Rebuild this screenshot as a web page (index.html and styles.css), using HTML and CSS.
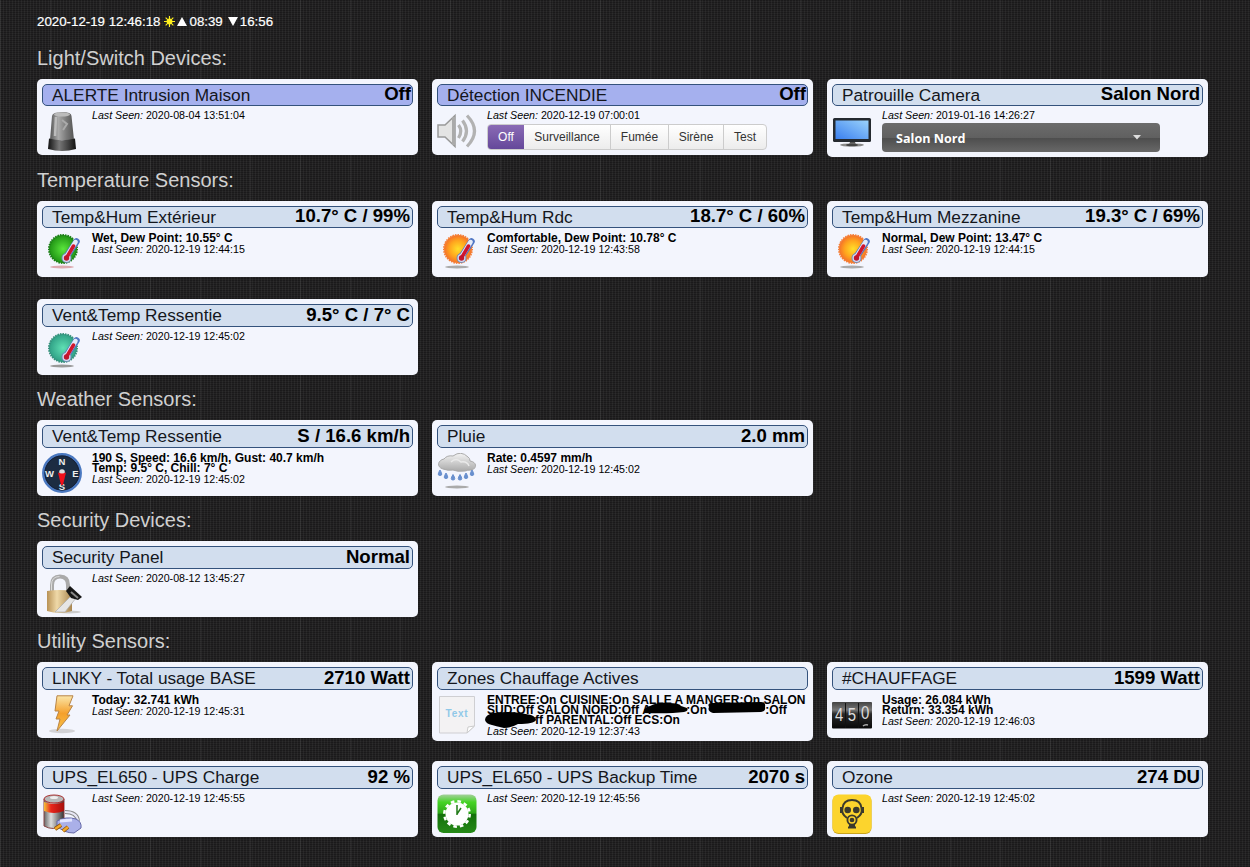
FILE: index.html
```html
<!DOCTYPE html>
<html lang="en">
<head>
<meta charset="utf-8">
<title>Dashboard</title>
<link rel="stylesheet" href="styles.css">
</head>
<body>
<svg class="defs" width="0" height="0" aria-hidden="true">
  <defs>
    <linearGradient id="gDome"><stop offset="0" stop-color="#555"/><stop offset=".35" stop-color="#aaa"/><stop offset=".7" stop-color="#777"/><stop offset="1" stop-color="#555"/></linearGradient>
    <linearGradient id="gBase"><stop offset="0" stop-color="#111"/><stop offset=".4" stop-color="#777"/><stop offset="1" stop-color="#111"/></linearGradient>
    <linearGradient id="gScreen" x1="0" y1="1" x2="1" y2="0"><stop offset="0" stop-color="#3a7ff0"/><stop offset="1" stop-color="#9ad2fa"/></linearGradient>
    <radialGradient id="gGreen"><stop offset="0" stop-color="#5ae63c"/><stop offset="1" stop-color="#1f9214"/></radialGradient>
    <radialGradient id="gTeal"><stop offset="0" stop-color="#5fe0b4"/><stop offset="1" stop-color="#2f9f85"/></radialGradient>
    <radialGradient id="gOrange"><stop offset="0" stop-color="#ffdf2a"/><stop offset=".6" stop-color="#ffa51e"/><stop offset="1" stop-color="#f4702a"/></radialGradient>
    <linearGradient id="gCloud" x1="0" y1="0" x2="0" y2="1"><stop offset="0" stop-color="#f4f4f4"/><stop offset="1" stop-color="#a9a9a9"/></linearGradient>
    <linearGradient id="gBolt" x1="0" y1="0" x2="0" y2="1"><stop offset="0" stop-color="#fbe6a8"/><stop offset=".5" stop-color="#f5a02c"/><stop offset="1" stop-color="#f7c24a"/></linearGradient>
    <linearGradient id="gLock"><stop offset="0" stop-color="#b89256"/><stop offset=".4" stop-color="#efd9a8"/><stop offset="1" stop-color="#a98650"/></linearGradient>
    <linearGradient id="gRed"><stop offset="0" stop-color="#f5c13a"/><stop offset=".35" stop-color="#e8261c"/><stop offset="1" stop-color="#a80f0c"/></linearGradient>
    <linearGradient id="gMetal"><stop offset="0" stop-color="#666"/><stop offset=".35" stop-color="#ddd"/><stop offset="1" stop-color="#333"/></linearGradient>
    <linearGradient id="gClock" x1="0" y1="0" x2="0" y2="1"><stop offset="0" stop-color="#a4cf9c"/><stop offset=".2" stop-color="#45d425"/><stop offset=".48" stop-color="#2fa71a"/><stop offset=".52" stop-color="#13700a"/><stop offset="1" stop-color="#268a18"/></linearGradient>
    <linearGradient id="gCounter" x1="0" y1="0" x2="0" y2="1"><stop offset="0" stop-color="#444"/><stop offset=".3" stop-color="#777"/><stop offset=".45" stop-color="#2a2a2a"/><stop offset="1" stop-color="#080808"/></linearGradient>
    <symbol id="thermo" viewBox="0 0 40 40">
      <path d="M34.500 8.500 25 23" stroke="#5076c4" stroke-width="6.500" stroke-linecap="round"/>
      <circle cx="24.500" cy="25" r="5" fill="#7088b8"/>
      <path d="M33.500 9 25 23" stroke="#e4eaf8" stroke-width="4.500" stroke-linecap="round"/>
      <circle cx="24.500" cy="25" r="4" fill="#d4dcf0"/>
      <path d="M31.500 13 25 24" stroke="#d0152e" stroke-width="3.500" stroke-linecap="round"/>
      <circle cx="24.500" cy="25" r="2.700" fill="#c0152e"/>
    </symbol>
  </defs>
</svg>

<main class="dashboard">
  <div class="clock">2020-12-19 12:46:18
    <svg class="sun" viewBox="0 0 12 12"><path d="M6 0v12M0 6h12M1.8 1.8l8.4 8.4M10.2 1.8 1.8 10.2" stroke="#fff01e" stroke-width="1.2"/><circle cx="6" cy="6" r="3.2" fill="#fff01e"/></svg>
    <svg class="arrow" viewBox="0 0 10 9"><path d="M5 0 10 9H0z" fill="#fff"/></svg><span class="rise">08:39</span>
    <svg class="arrow" viewBox="0 0 10 9"><path d="M0 0h10L5 9z" fill="#fff"/></svg><span>16:56</span>
  </div>

  <section class="group group-switches">
    <h2>Light/Switch Devices:</h2>
    <div class="cards">
      <article class="card">
        <header class="bar bar-off"><span>ALERTE Intrusion Maison</span><b>Off</b></header>
        <div class="body">
          <svg class="icon" viewBox="0 0 40 40"><path d="M8 29 10 5Q10.500 1 20 1t9.500 4L32 29z" fill="url(#gDome)"/><ellipse cx="20" cy="3.500" rx="8" ry="2" fill="#bbb"/><path d="M14 6 13 25" stroke="#bbb" stroke-width="2.500"/><path d="m20 9 5 4-4 6" stroke="#aaa" stroke-width="2" fill="none"/><path d="M7 27.500Q20 31 33 27.500L34 38Q20 42 6 38z" fill="url(#gBase)"/></svg>
          <div class="info"><p class="seen"><i>Last Seen:</i> 2020-08-04 13:51:04</p></div>
        </div>
      </article>
      <article class="card">
        <header class="bar bar-off"><span>Détection INCENDIE</span><b>Off</b></header>
        <div class="body">
          <svg class="icon" viewBox="0 0 40 40"><path d="M1 14h7L18 4.500v31L8 26H1z" fill="#e4e4e4" stroke="#999" stroke-width="1.500"/><path d="M16.500 6v28" stroke="#aaa" stroke-width="3"/><g fill="none" stroke="#b2b2b2" stroke-width="3.200"><path d="M21.500 14q4.500 6 0 13"/><path d="M25.500 9.500q8 10.500 0 21"/><path d="M30 4.500q15 15.500 0 31"/></g></svg>
          <div class="info"><p class="seen"><i>Last Seen:</i> 2020-12-19 07:00:01</p>
            <div class="levels"><span class="on w-off">Off</span><span class="w-surv">Surveillance</span><span class="w-fum">Fumée</span><span class="w-sir">Sirène</span><span class="w-test">Test</span></div>
          </div>
        </div>
      </article>
      <article class="card card-select">
        <header class="bar"><span>Patrouille Camera</span><b>Salon Nord</b></header>
        <div class="body">
          <svg class="icon" viewBox="0 0 40 40"><rect x="1" y="7" width="38" height="24" rx="1.500" fill="#252a30"/><rect x="3.500" y="9.500" width="33" height="18.500" fill="url(#gScreen)"/><path d="M18 31h5l1 2.500h-7z" fill="#555"/><ellipse cx="20" cy="34" rx="12" ry="1.600" fill="#888"/><ellipse cx="20" cy="34" rx="6" ry="1.300" fill="#444"/></svg>
          <div class="info"><p class="seen"><i>Last Seen:</i> 2019-01-16 14:26:27</p>
            <div class="select"><span>Salon Nord</span><svg width="8" height="5" viewBox="0 0 8 5"><path d="M0 0h8L4 4.500z" fill="#ddd"/></svg></div>
          </div>
        </div>
      </article>
    </div>
  </section>

  <section class="group group-temp">
    <h2>Temperature Sensors:</h2>
    <div class="cards">
      <article class="card">
        <header class="bar"><span>Temp&amp;Hum Extérieur</span><b>10.7° C / 99%</b></header>
        <div class="body">
          <svg class="icon" viewBox="0 0 40 40"><ellipse cx="20" cy="34" rx="12" ry="1.500" fill="#dcaab0"/><circle cx="21" cy="16" r="14" fill="url(#gGreen)"/><circle cx="21" cy="16" r="14" fill="none" stroke="#1c7d18" stroke-width="2" stroke-dasharray="1.500 1"/><use href="#thermo"/></svg>
          <div class="info"><p class="data">Wet, Dew Point: 10.55° C</p><p class="seen"><i>Last Seen:</i> 2020-12-19 12:44:15</p></div>
        </div>
      </article>
      <article class="card">
        <header class="bar"><span>Temp&amp;Hum Rdc</span><b>18.7° C / 60%</b></header>
        <div class="body">
          <svg class="icon" viewBox="0 0 40 40"><ellipse cx="20" cy="34" rx="12" ry="1.500" fill="#aaa"/><circle cx="21" cy="16" r="14" fill="url(#gOrange)"/><circle cx="21" cy="16" r="14" fill="none" stroke="#f4803a" stroke-width="2" stroke-dasharray="1.500 1"/><use href="#thermo"/></svg>
          <div class="info"><p class="data">Comfortable, Dew Point: 10.78° C</p><p class="seen"><i>Last Seen:</i> 2020-12-19 12:43:58</p></div>
        </div>
      </article>
      <article class="card">
        <header class="bar"><span>Temp&amp;Hum Mezzanine</span><b>19.3° C / 69%</b></header>
        <div class="body">
          <svg class="icon" viewBox="0 0 40 40"><ellipse cx="20" cy="34" rx="12" ry="1.500" fill="#aaa"/><circle cx="21" cy="16" r="14" fill="url(#gOrange)"/><circle cx="21" cy="16" r="14" fill="none" stroke="#f4803a" stroke-width="2" stroke-dasharray="1.500 1"/><use href="#thermo"/></svg>
          <div class="info"><p class="data">Normal, Dew Point: 13.47° C</p><p class="seen"><i>Last Seen:</i> 2020-12-19 12:44:15</p></div>
        </div>
      </article>
      <article class="card card-tall-bar">
        <header class="bar"><span>Vent&amp;Temp Ressentie</span><b>9.5° C / 7° C</b></header>
        <div class="body">
          <svg class="icon" viewBox="0 0 40 40"><ellipse cx="20" cy="34" rx="12" ry="1.500" fill="#999"/><circle cx="21" cy="16" r="14" fill="url(#gTeal)"/><circle cx="21" cy="16" r="14" fill="none" stroke="#368f7b" stroke-width="2" stroke-dasharray="1.500 1"/><use href="#thermo"/></svg>
          <div class="info"><p class="seen"><i>Last Seen:</i> 2020-12-19 12:45:02</p></div>
        </div>
      </article>
    </div>
  </section>

  <section class="group">
    <h2>Weather Sensors:</h2>
    <div class="cards">
      <article class="card">
        <header class="bar"><span>Vent&amp;Temp Ressentie</span><b>S / 16.6 km/h</b></header>
        <div class="body">
          <svg class="icon" viewBox="0 0 40 40"><circle cx="20" cy="20" r="18.700" fill="#1c2c42" stroke="#4a78c0" stroke-width="2.500"/><circle cx="20" cy="20" r="17" fill="none" stroke="#14203a"/><g class="compass"><text x="20" y="12">N</text><text x="33.500" y="23.500">E</text><text x="20" y="36.500">S</text><text x="7.500" y="23.500">W</text></g><circle cx="20" cy="19" r="2.800" fill="#ddd"/><path d="M16 19.500q4 2 8 0L21 32h-2z" fill="#f0101a"/></svg>
          <div class="info"><p class="data">190 S, Speed: 16.6 km/h, Gust: 40.7 km/h<br>Temp: 9.5° C, Chill: 7° C</p><p class="seen"><i>Last Seen:</i> 2020-12-19 12:45:02</p></div>
        </div>
      </article>
      <article class="card">
        <header class="bar"><span>Pluie</span><b>2.0 mm</b></header>
        <div class="body">
          <svg class="icon" viewBox="0 0 40 40"><ellipse cx="20" cy="34" rx="12" ry="1.500" fill="#aaa"/><path d="M6 16C-1 14 1 7 7 6q3-4 9-3Q24-3 31 4q2 1 2 4c7 1 7 7 2 9q-5 0-7 1-8 1-12-1-5 1-10-1z" fill="url(#gCloud)" stroke="#aaa"/><path d="M14 9q5-5 10 0 6-1 8 4" fill="none" stroke="#e9e9e9" stroke-width="1.500"/><g fill="#688fce"><path id="drop" d="M3 17q3.500 5.500 0 5.500T3 17z" stroke="#688fce"/><use href="#drop" x="6" y="3"/><use href="#drop" x="13" y="4.500"/><use href="#drop" x="20" y="4.500"/><use href="#drop" x="26" y="3"/><use href="#drop" x="32" y="0"/></g></svg>
          <div class="info"><p class="data">Rate: 0.4597 mm/h</p><p class="seen"><i>Last Seen:</i> 2020-12-19 12:45:02</p></div>
        </div>
      </article>
    </div>
  </section>

  <section class="group">
    <h2>Security Devices:</h2>
    <div class="cards">
      <article class="card">
        <header class="bar"><span>Security Panel</span><b>Normal</b></header>
        <div class="body">
          <svg class="icon" viewBox="0 0 40 40"><ellipse cx="27" cy="38" rx="12" ry="1.500" fill="#ccc"/><path d="M10 18V11q0-8.500 8-8.500t8 8.500v7" fill="none" stroke="#aaa" stroke-width="4"/><path d="M9.500 18V11q0-8.500 8-8.500" fill="none" stroke="#ddd"/><path d="M5 17q12-2 25 0v20q-12 4-25 0z" fill="url(#gLock)"/><path d="M30 21 13 38h10l11-14z" fill="#e6e6e6" stroke="#aaa" stroke-width=".7"/><path d="m28 12 12 11-4 3-7-2-5-7z" fill="#161616"/><path d="m29 18 7 6" stroke="#888" stroke-width="2"/></svg>
          <div class="info"><p class="seen"><i>Last Seen:</i> 2020-08-12 13:45:27</p></div>
        </div>
      </article>
    </div>
  </section>

  <section class="group group-utility">
    <h2>Utility Sensors:</h2>
    <div class="cards">
      <article class="card">
        <header class="bar"><span>LINKY - Total usage BASE</span><b>2710 Watt</b></header>
        <div class="body">
          <svg class="icon" viewBox="0 0 40 40"><ellipse cx="20" cy="36" rx="13" ry="2.200" fill="#d2d2d6"/><path d="M15 .8h16l-4 10h3.500L25 20h3L15 36l3-12h-4l3-8h-4z" fill="url(#gBolt)" stroke="#b88446"/></svg>
          <div class="info"><p class="data">Today: 32.741 kWh</p><p class="seen"><i>Last Seen:</i> 2020-12-19 12:45:31</p></div>
        </div>
      </article>
      <article class="card card-zones">
        <header class="bar"><span>Zones Chauffage Actives</span></header>
        <div class="body">
          <svg class="icon" viewBox="0 0 40 40"><path d="M2.500 1.500h35V31L30 38H2.500z" fill="#f3f2f3" stroke="#cfcfd2"/><path d="M37.500 31 30 38l1-6z" fill="#fff" stroke="#ccc"/><text class="text-label" x="20" y="22">Text</text></svg>
          <div class="info">
            <p class="data">ENTREE:On CUISINE:On SALLE A MANGER:On SALON<br>SUD:Off SALON NORD:Off <span class="gap gap-a">A</span>:On <span class="gap gap-b"></span>:Off<br><span class="gap gap-c"></span>ff PARENTAL:Off ECS:On</p>
            <p class="seen"><i>Last Seen:</i> 2020-12-19 12:37:43</p>
            <svg class="scribble" viewBox="0 0 290 30"><path d="M159 14q0-5 6-6 8-4 18-3 12 0 13 3l6 2q2 3-3 4-15 2-40 1zM224 9q-2-4 3-4l49-1q5 0 4 5 1 4-4 5l-48 1q-6-2-4-6zM0 22q0-5 8-7 17-2 27 0l11 2q5 2 5 5-2 4-18 4-7 4-14 4-9-2-12-3Q1 26 0 22z" fill="#000"/></svg>
          </div>
        </div>
      </article>
      <article class="card">
        <header class="bar"><span>#CHAUFFAGE</span><b>1599 Watt</b></header>
        <div class="body">
          <svg class="icon" viewBox="0 0 40 40"><rect y="7" width="40" height="26.500" rx="1" fill="url(#gCounter)"/><path d="M13.500 8v25M26.500 8v25" stroke="#111"/><g class="digits"><text x="8.500" y="26.500">4</text><text x="24" y="26.500">5</text><text x="40" y="24">0</text></g><path d="M31 31q2-2 5-1" stroke="#aaa" stroke-width="1.500" fill="none"/></svg>
          <div class="info"><p class="data">Usage: 26.084 kWh<br>Return: 33.354 kWh</p><p class="seen"><i>Last Seen:</i> 2020-12-19 12:46:03</p></div>
        </div>
      </article>
      <article class="card">
        <header class="bar"><span>UPS_EL650 - UPS Charge</span><b>92 %</b></header>
        <div class="body">
          <svg class="icon" viewBox="0 0 40 40"><path d="M2 5v27q9 5 20 0V5z" fill="url(#gMetal)" stroke="#844"/><path d="M2 8q10 4 20 0v9q-10 4-20 0z" fill="url(#gRed)"/><ellipse cx="12" cy="5" rx="10" ry="4" fill="#b8b8b8" stroke="#a33"/><ellipse cx="12" cy="3.500" rx="4" ry="1.600" fill="#eee"/><path d="M23 18q12 0 13 9" fill="none" stroke="#888" stroke-width="4"/><path d="M23 18q12 0 13 9" fill="none" stroke="#e8e8f5" stroke-width="2"/><path d="M15 27q9-5 19-2 6 3 5 9l-7 5q-10 0-17-7z" fill="#aab0e8" stroke="#6468a8"/><path d="m18 27 12-1" stroke="#e3e6ff" stroke-width="3"/><path d="m19 31-6 4m13-2-5 4" stroke="#8a5310" stroke-width="4"/><path d="m19 31-6 4m13-2-5 4" stroke="#f3a828" stroke-width="2.500"/></svg>
          <div class="info"><p class="seen"><i>Last Seen:</i> 2020-12-19 12:45:55</p></div>
        </div>
      </article>
      <article class="card">
        <header class="bar"><span>UPS_EL650 - UPS Backup Time</span><b>2070 s</b></header>
        <div class="body">
          <svg class="icon" viewBox="0 0 40 40"><rect x=".5" y=".5" width="39" height="38.500" rx="6" fill="url(#gClock)"/><circle cx="20" cy="20" r="11.500" fill="#fff"/><circle cx="20" cy="20" r="12.700" fill="none" stroke="#fff" stroke-width="2.500" stroke-dasharray="3.600 3.050"/><path d="M20 21V11M20 20l4-6" stroke="#227b18" stroke-width="1.500"/></svg>
          <div class="info"><p class="seen"><i>Last Seen:</i> 2020-12-19 12:45:56</p></div>
        </div>
      </article>
      <article class="card">
        <header class="bar"><span>Ozone</span><b>274 DU</b></header>
        <div class="body">
          <svg class="icon" viewBox="0 0 40 40"><rect x=".5" y="1" width="39" height="39" rx="6" fill="#c9a31c"/><rect x=".5" y=".5" width="39" height="38.500" rx="6" fill="#fcd42d"/><g fill="none" stroke="#3b3a2c" stroke-width="2"><path d="M15 24Q9 20 10.500 14q1-8 9.500-8t9.500 8q1.500 6-4.500 10"/><path d="M9 13v6M31 13v6"/></g><g fill="#3b3a2c"><circle cx="15.700" cy="16" r="3.300"/><circle cx="24.300" cy="16" r="3.300"/><circle cx="20" cy="26" r="5.500"/><rect x="17" y="30" width="6" height="3"/><rect x="16" y="32.500" width="8" height="2"/></g><circle cx="20" cy="26" r="3" fill="none" stroke="#fcd42d" stroke-width="1.300"/></svg>
          <div class="info"><p class="seen"><i>Last Seen:</i> 2020-12-19 12:45:02</p></div>
        </div>
      </article>
    </div>
  </section>
</main>
</body>
</html>
```
FILE: styles.css
```css
* { box-sizing: border-box; }
body {
  margin: 0;
  min-height: 867px;
  background-color: #232223;
  background-image:
    repeating-linear-gradient(90deg, rgba(255,255,255,.06) 0 1px, transparent 1px 50px),
    repeating-linear-gradient(90deg, rgba(255,255,255,.045) 0 1px, transparent 1px 3px),
    repeating-linear-gradient(0deg, rgba(0,0,0,.25) 0 1px, transparent 1px 2px);
  font-family: "Liberation Sans", Arial, sans-serif;
  color: #000;
}
.defs { position: absolute; }
.dashboard { padding: 13px 42px 0 37px; }
.clock {
  display: flex;
  align-items: center;
  height: 16px;
  margin-bottom: 18px;
  color: #fff;
  font-size: 13.3px;
  white-space: nowrap;
  -webkit-text-stroke: .2px #fff;
}
.sun { width: 11px; height: 11px; margin: 0 2px 0 4px; }
.arrow { width: 10px; height: 9px; margin-right: 2px; }
.rise { margin-right: 5px; }

.group { margin-bottom: 13px; }
.group-switches { margin-bottom: 14px; }
.group h2 {
  margin: 0 0 10px;
  height: 22px;
  line-height: 22px;
  font-size: 20px;
  font-weight: 400;
  color: #d0d0d0;
}
.cards {
  display: grid;
  grid-template-columns: repeat(3, 381px);
  grid-auto-rows: 76px;
  gap: 22px 14px;
  align-items: start;
}
.group-utility .cards { row-gap: 23px; }
.card {
  height: 76px;
  padding: 5px;
  border-radius: 5px;
  background: #f3f5fd;
}
.card-select { height: 78px; }
.card-zones { height: 79px; }

.bar {
  display: flex;
  justify-content: space-between;
  align-items: center;
  height: 23px;
  padding: 0 2px 0 9px;
  border: 1px solid #34527c;
  border-radius: 5px;
  background: #d2deee;
  font-size: 17.28px;
  line-height: 21px;
  white-space: nowrap;
}
.bar span { color: #14161c; }
.group-switches .bar, .group-temp .bar { height: 22px; }
.group-temp .card-tall-bar .bar { height: 23px; }
.bar-off { background: #a5b0ee; }
.group-switches .bar-off { padding-right: 1px; }
.bar b { font-size: 18.6px; padding-bottom: 1px; line-height: 20px; }
.group-switches .bar b, .group-temp .bar b { padding-bottom: 2px; }

.body { display: flex; gap: 10px; padding-top: 5px; }
.icon { flex: none; width: 40px; height: 40px; }
.info { position: relative; flex: 1; margin-top: -1px; white-space: nowrap; }
.info p { margin: 0; }
.data { font-size: 12px; font-weight: 700; line-height: 10px; padding-top: 1px; }
.seen { font-size: 10.67px; line-height: 11px; }
.data + .seen { line-height: 12px; }

.levels {
  display: flex;
  width: 280px;
  height: 26px;
  margin-top: 3px;
  border: 1px solid #ccc;
  border-radius: 4px;
  overflow: hidden;
  background: linear-gradient(#fff, #ececec);
  font-size: 12px;
  line-height: 24px;
  text-align: center;
  color: #333;
}
.levels span + span { border-left: 1px solid #ccc; }
.levels .on { background: linear-gradient(#8a6bb5, #65489a); color: #fff; }
.w-off { width: 36px; }
.levels .w-surv { width: 86px; border-left: 0; }
.w-fum { width: 58px; }
.w-sir { width: 55px; }
.w-test { width: 43px; }

.select {
  display: flex;
  align-items: center;
  justify-content: space-between;
  width: 278px;
  height: 29px;
  margin-top: 2px;
  padding: 0 19px 0 14px;
  border-radius: 4px;
  background: linear-gradient(#6c6c6c, #606060 50%, #4d4d4d 51%, #686868);
  color: #fff;
  font: 700 12.6px "Open Sans", sans-serif;
}
.select span { padding-top: 1px; }

.compass { fill: #eee; font: 700 9.5px "Liberation Sans", sans-serif; text-anchor: middle; }
.text-label { fill: #8fc8e8; font: 700 10px "Liberation Sans", sans-serif; letter-spacing: .8px; text-anchor: middle; }
.digits { fill: #ddd; font: 18px "Liberation Sans", sans-serif; text-anchor: middle; transform: scaleX(.83); }

.gap { display: inline-block; height: 10px; vertical-align: top; }
.gap-a { width: 44px; }
.gap-b { width: 55px; }
.gap-c { width: 48px; }
.scribble { position: absolute; left: -2px; top: 4px; width: 290px; height: 30px; }
```
